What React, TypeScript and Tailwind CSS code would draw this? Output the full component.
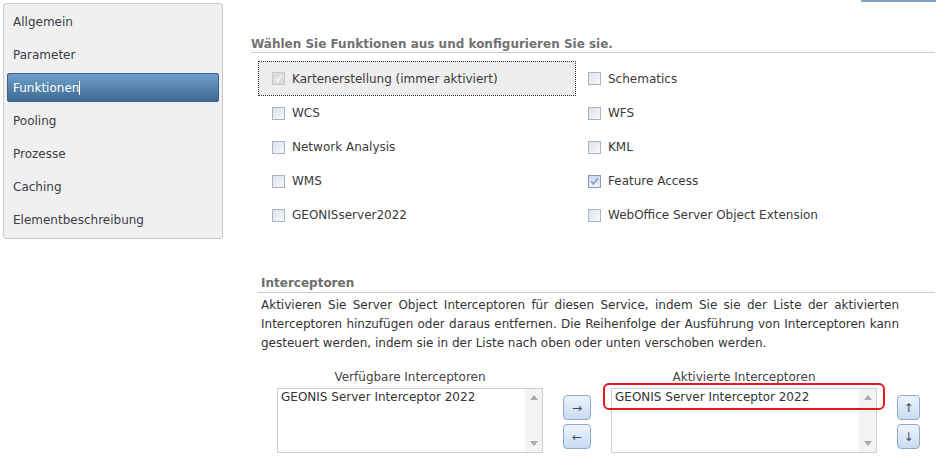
import React from "react";

const navItems = ["Allgemein", "Parameter", "Funktionen", "Pooling", "Prozesse", "Caching", "Elementbeschreibung"];

function Checkbox({ checked = false, disabled = false }: { checked?: boolean; disabled?: boolean }) {
  if (disabled) {
    return (
      <span className="flex h-[13px] w-[13px] shrink-0 items-center justify-center border border-[#c6c6c6] bg-[#dcdcdc]">
        <svg width="9" height="9" viewBox="0 0 9 9">
          <path d="M1.5 4.8 L3.6 6.8 L7.6 2" stroke="#f4f4f4" strokeWidth="1.6" fill="none" />
        </svg>
      </span>
    );
  }
  return (
    <span
      className={
        "flex h-[13px] w-[13px] shrink-0 items-center justify-center border " +
        (checked
          ? "border-[#8c9bb2] bg-gradient-to-b from-[#c9d9ee] to-[#eef3fa]"
          : "border-[#aab3c1] bg-gradient-to-br from-[#dde3ec] to-[#f7f9fb]")
      }
    >
      {checked && (
        <svg width="9" height="9" viewBox="0 0 9 9">
          <path d="M1.3 4.6 L3.5 6.9 L7.8 1.6" stroke="#3f6ea8" strokeWidth="1.5" fill="none" />
          <path d="M1.3 4.6 L3.5 6.9 L7.8 1.6" stroke="#ffffff" strokeWidth="0.5" fill="none" />
        </svg>
      )}
    </span>
  );
}

function CheckItem({ label, checked, disabled }: { label: string; checked?: boolean; disabled?: boolean }) {
  return (
    <div className="flex items-center gap-[7px]">
      <Checkbox checked={checked} disabled={disabled} />
      <span className="text-[12px] leading-[16px] text-[#3a3a3a]">{label}</span>
    </div>
  );
}

function ListBox({ item }: { item: string }) {
  return (
    <div className="flex h-[65px] w-[266px] border border-[#cfcfcf] bg-white">
      <div className="flex-1 pl-[3px] pt-[1px] text-[12px] leading-[15px] text-[#333]">{item}</div>
      <div className="flex w-[17px] flex-col items-center justify-between bg-[#f3f3f3] py-[6px]">
        <svg width="8" height="5" viewBox="0 0 8 5">
          <path d="M0 5 L4 0 L8 5 Z" fill="#a9a9a9" />
        </svg>
        <svg width="8" height="5" viewBox="0 0 8 5">
          <path d="M0 0 L8 0 L4 5 Z" fill="#a9a9a9" />
        </svg>
      </div>
    </div>
  );
}

function ArrowButton({ glyph, w }: { glyph: string; w: string }) {
  return (
    <div
      className={
        "flex h-[25px] items-center justify-center rounded-[4px] border border-[#8fa9cc] bg-gradient-to-b from-[#eef4fc] to-[#c9dbf3] text-[12px] leading-none text-[#4a4a5a] " +
        w
      }
    >
      {glyph}
    </div>
  );
}

export default function App() {
  return (
    <div className="flex h-[458px] w-[936px] overflow-hidden bg-white font-['DejaVu_Sans',Verdana,sans-serif]">
      {/* Sidebar */}
      <div className="pl-[3px] pt-[3px]">
        <div className="flex h-[236px] w-[220px] flex-col rounded-[3px] border border-[#cbcbcb] bg-[#f0f0f0] px-[3px] pt-[1px]">
          {navItems.map((n) =>
            n === "Funktionen" ? (
              <div key={n} className="flex h-[33px] flex-col justify-center">
                <div className="flex h-[29px] items-center rounded-[3px] bg-gradient-to-b from-[#6fa3cd] to-[#3d6891] px-[6px] text-[12px] text-white shadow-[inset_0_0_0_1px_#3a6186]">
                  <span>
                    Funktione<span className="border-r border-white">n</span>
                  </span>
                </div>
              </div>
            ) : (
              <div key={n} className="flex h-[33px] items-center px-[6px] text-[12px] text-[#3c3c48]">
                {n}
              </div>
            )
          )}
        </div>
      </div>

      {/* Main */}
      <div className="ml-[28px] flex flex-1 flex-col">
        <div className="flex h-[2px] justify-end">
          <div className="h-[2px] w-[75px] bg-[#82a1c9]" />
        </div>

        <div className="mr-[1px] mt-[34px] border-b border-[#cccccc]">
          <div className="h-[16px] text-[12px] font-bold leading-[16px] text-[#727272]">
            Wählen Sie Funktionen aus und konfigurieren Sie sie.
          </div>
        </div>

        <div className="ml-[7px] mt-[8px] grid grid-cols-[318px_1fr]">
          <div className="flex h-[35px] items-center border border-dotted border-[#333] bg-[#eeeeee] pl-[13px]">
            <CheckItem label="Kartenerstellung (immer aktiviert)" disabled />
          </div>
          <div className="flex h-[35px] items-center pl-[12px]">
            <CheckItem label="Schematics" />
          </div>
          <div className="flex h-[34px] items-center pl-[14px]">
            <CheckItem label="WCS" />
          </div>
          <div className="flex h-[34px] items-center pl-[12px]">
            <CheckItem label="WFS" />
          </div>
          <div className="flex h-[34px] items-center pl-[14px]">
            <CheckItem label="Network Analysis" />
          </div>
          <div className="flex h-[34px] items-center pl-[12px]">
            <CheckItem label="KML" />
          </div>
          <div className="flex h-[34px] items-center pl-[14px]">
            <CheckItem label="WMS" />
          </div>
          <div className="flex h-[34px] items-center pl-[12px]">
            <CheckItem label="Feature Access" checked />
          </div>
          <div className="flex h-[34px] items-center pl-[14px]">
            <CheckItem label="GEONISserver2022" />
          </div>
          <div className="flex h-[34px] items-center pl-[12px]">
            <CheckItem label="WebOffice Server Object Extension" />
          </div>
        </div>

        {/* Interceptoren */}
        <div className="ml-[7px] mr-[1px] mt-[43px] flex flex-col">
          <div className="border-b border-[#cccccc] pl-[3px]">
            <div className="h-[17px] text-[12px] font-bold leading-[16px] text-[#6e6e6e]">Interceptoren</div>
          </div>
          <p className="mt-[3px] w-[641px] pl-[3px] text-justify text-[12px] leading-[19px] text-[#333]">
            Aktivieren Sie Server Object Interceptoren für diesen Service, indem Sie sie der Liste der aktivierten
            Interceptoren hinzufügen oder daraus entfernen. Die Reihenfolge der Ausführung von Interceptoren kann
            gesteuert werden, indem sie in der Liste nach oben oder unten verschoben werden.
          </p>

          <div className="ml-[19px] mt-[16px] flex items-start">
            <div className="flex flex-col items-center">
              <div className="mb-[3px] h-[16px] text-[12px] leading-[16px] text-[#444]">Verfügbare Interceptoren</div>
              <ListBox item="GEONIS Server Interceptor 2022" />
            </div>
            <div className="ml-[20px] mt-[26px] flex flex-col gap-[4px]">
              <ArrowButton glyph="→" w="w-[28px]" />
              <ArrowButton glyph="←" w="w-[28px]" />
            </div>
            <div className="ml-[20px] flex flex-col items-center">
              <div className="mb-[3px] h-[16px] text-[12px] leading-[16px] text-[#444]">Aktivierte Interceptoren</div>
              <div className="relative">
                <ListBox item="GEONIS Server Interceptor 2022" />
                <div className="pointer-events-none absolute left-[-8px] top-[-5px] h-[27px] w-[282px] rounded-[6px] border-2 border-[#e8161e]" />
              </div>
            </div>
            <div className="ml-[20px] mt-[26px] flex flex-col gap-[4px]">
              <ArrowButton glyph="↑" w="w-[23px]" />
              <ArrowButton glyph="↓" w="w-[23px]" />
            </div>
          </div>
        </div>
      </div>
    </div>
  );
}
